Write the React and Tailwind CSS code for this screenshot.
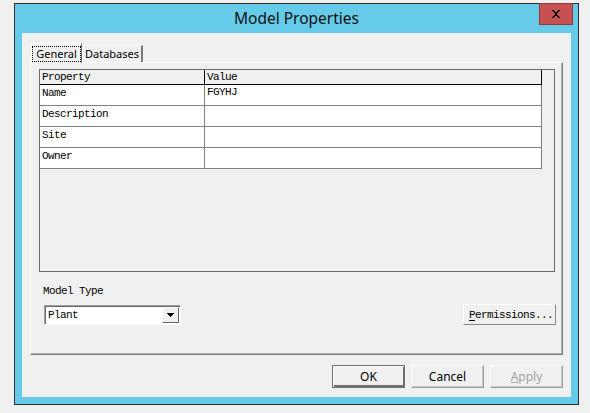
const mono = "font-['Liberation_Mono','DejaVu_Sans_Mono',monospace] text-[11px] tracking-[-0.6px] leading-[12px] text-black";
const ui = "font-['Segoe_UI','Noto_Sans',sans-serif]";

const rows = [
  { name: 'Name', value: 'FGYHJ' },
  { name: 'Description', value: '' },
  { name: 'Site', value: '' },
  { name: 'Owner', value: '' },
];

const CloseGlyph = () => (
  <svg width="10" height="8" viewBox="0 0 10 8" shapeRendering="crispEdges">
    <path d="M1 0h2v1h1v1h2V1h1V0h2v1H8v1H7v1H6v2h1v1h1v1h1v1H7V7H6V6H4v1H3v1H1V7h1V6h1V5h1V3H3V2H2V1H1z" fill="#000" />
  </svg>
);

const DownArrow = () => (
  <svg width="7" height="4" viewBox="0 0 7 4" shapeRendering="crispEdges">
    <path d="M0 0h7v1H6v1H5v1H4v1H3V3H2V2H1V1H0z" fill="#000" />
  </svg>
);

const Button = ({ children, primary, disabled }) => (
  <button
    className={`w-[73px] h-[23px] bg-[#f0f0f0] ${ui} text-[12px] flex items-center justify-center border ${
      primary
        ? 'border-[#707070] shadow-[inset_1px_1px_0_#ffffff,inset_-1px_-2px_0_#707070]'
        : 'border-t-white border-l-white border-r-[#9c9c9c] border-b-[#9c9c9c] shadow-[inset_-1px_-1px_0_#c8c8c8]'
    } ${disabled ? 'text-[#a0a0a0]' : 'text-black'}`}
  >
    {children}
  </button>
);

export default function App() {
  return (
    <div className="min-h-screen bg-[#f0f0f0] pt-[3px] pl-[14px]">
      {/* dialog frame */}
      <div className="relative w-[565px] h-[402px] border border-[#2e2e2e] bg-[#65cbe9] flex flex-col">
        <div className="h-[29px] flex items-center justify-center">
          <span className={`${ui} text-[15.5px] text-[#111]`}>Model Properties</span>
        </div>
        <div className="absolute -top-px right-[5px] w-[34px] h-[22px] bg-[#c75050] border border-[#8e3b3b] flex items-center justify-center">
          <CloseGlyph />
        </div>

        {/* client area */}
        <div className="mx-[7px] mb-[7px] flex-1 bg-[#f0f0f0] px-[8px] pt-[10px] flex flex-col">
          {/* tabs */}
          <div className="flex items-end h-[19px] pl-px">
            <div className={`relative z-10 h-[20px] -mb-px w-[51px] bg-[#f0f0f0] border-t border-l border-t-white border-l-white border-r border-r-[#696969] flex items-start justify-center pt-[2px] ${ui} text-[11px] text-black`}>
              <span className="border border-dotted border-black px-[3px] h-[16px] leading-[14px]">General</span>
            </div>
            <div className={`h-[17px] w-[61px] bg-[#f0f0f0] border-t border-t-white border-l border-l-white border-r-2 border-r-[#7a7a7a] flex items-center justify-center ${ui} text-[11px] text-black`}>
              Databases
            </div>
          </div>

          {/* tab page */}
          <div className="h-[293px] border border-t-white border-l-white border-r-[#7a7a7a] border-b-[#7a7a7a] shadow-[inset_-1px_-1px_0_#b0b0b0] pt-[6px] pl-[8px] pr-[7px] flex flex-col">
            {/* property grid */}
            <div className="h-[203px] border border-[#6b6b6b] bg-[#f0f0f0]">
              <div className="w-[502px]">
                <div className="flex h-[15px] border-b border-black border-r">
                  <div className={`w-[165px] border-r border-black pl-[2px] ${mono} leading-[14px]`}>Property</div>
                  <div className={`flex-1 pl-[2px] ${mono} leading-[14px]`}>Value</div>
                </div>
                {rows.map((r) => (
                  <div key={r.name} className="flex h-[21px] bg-white border-b border-r border-[#808080]">
                    <div className={`w-[165px] border-r border-[#808080] pl-[2px] pt-[2px] ${mono}`}>{r.name}</div>
                    <div className={`flex-1 pl-[2px] pt-px ${mono}`}>{r.value}</div>
                  </div>
                ))}
              </div>
            </div>

            <div className="flex items-end justify-between -mr-px">
              <div className="pl-[4px]">
                <div className={`mt-[13px] ${mono}`}>Model Type</div>
                <div className="mt-[8px] ml-px w-[137px] h-[20px] bg-white border border-t-[#a0a0a0] border-l-[#a0a0a0] border-r-white border-b-white shadow-[inset_1px_1px_0_#696969] flex items-center">
                  <span className={`flex-1 pl-[3px] ${mono}`}>Plant</span>
                  <div className="mr-px w-[17px] h-[16px] bg-[#f0f0f0] border border-t-white border-l-white border-r-[#696969] border-b-[#696969] flex items-center justify-center">
                    <DownArrow />
                  </div>
                </div>
              </div>
              <button className={`w-[93px] h-[21px] bg-[#f0f0f0] border border-t-white border-l-white border-r-[#8a8a8a] border-b-[#8a8a8a] flex items-center pl-[5px] ${mono}`}>
                <span className="underline underline-offset-[2px]">P</span>ermissions...
              </button>
            </div>
          </div>

          {/* dialog buttons */}
          <div className="flex justify-end gap-[6px] mt-[10px]">
            <Button primary>OK</Button>
            <Button>Cancel</Button>
            <Button disabled>
              <span className="underline">A</span>pply
            </Button>
          </div>
        </div>
      </div>
    </div>
  );
}
